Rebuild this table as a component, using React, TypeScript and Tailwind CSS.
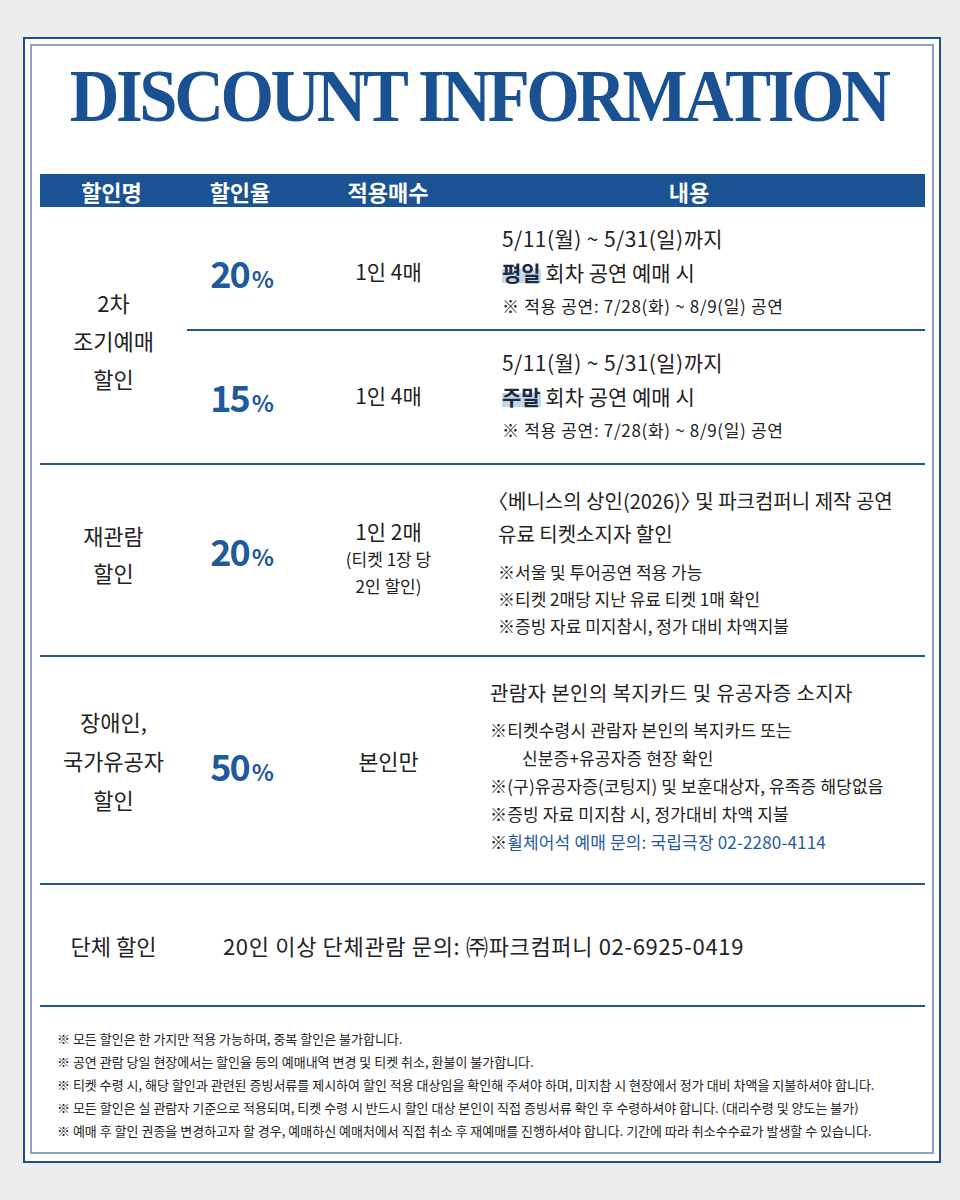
import React from "react";

function Pct({ n }: { n: string }) {
  return (
    <div className="flex items-baseline font-bold text-[#1f5a9c]">
      <span className="text-[36px] leading-none tracking-[-2px]">{n}</span>
      <span className="ml-[3px] text-[23px] leading-none">%</span>
    </div>
  );
}

function SubRow({ pct, day, border }: { pct: string; day: string; border?: boolean }) {
  return (
    <div
      className={
        border
          ? "grid h-[124px] grid-cols-[110px_183px_1fr] border-b-2 border-[#24568f]"
          : "grid flex-1 grid-cols-[110px_183px_1fr]"
      }
    >
      <div className="pt-[14px]">
        <div className="flex h-[102px] items-center justify-center">
          <Pct n={pct} />
        </div>
      </div>
      <div className="pt-[14px]">
        <div className="flex h-[102px] items-center justify-center text-[21px]">1인 4매</div>
      </div>
      <div className="pl-[22px] pt-[14px] leading-[34px]">
        <div className="text-[21px] tracking-[0.02em]">5/11(월) ~ 5/31(일)까지</div>
        <div className="text-[21px]">
          <span className="inline-block bg-[linear-gradient(to_bottom,transparent_38%,#c6d6e9_38%)] font-bold leading-[22px] text-[#1b2b3e]">
            {day}
          </span>{" "}
          회차 공연 예매 시
        </div>
        <div className="text-[17px] tracking-[0.04em]">※ 적용 공연: 7/28(화) ~ 8/9(일) 공연</div>
      </div>
    </div>
  );
}

export default function App() {
  return (
    <div className="h-[1200px] w-[960px] bg-[#ececec] pl-[23px] pt-[37px] font-['Noto_Sans_CJK_KR',sans-serif] text-[#222]">
      <div className="h-[1126px] w-[918px] border-2 border-[#1d4f8a] bg-white px-[5px] pb-[7px] pt-[5px]">
        <div className="flex h-full flex-col border-2 border-[#8aa3c2] pl-[8px] pr-[7px]">
          {/* Title */}
          <div className="flex h-[128px] justify-center pr-[8px] pt-[13px]">
            <h1 className="scale-x-[0.93] whitespace-nowrap font-['Liberation_Serif',serif] text-[74px] font-bold leading-[74px] tracking-[-0.05em] text-[#1a5193]">
              DISCOUNT INFORMATION
            </h1>
          </div>

          {/* Header */}
          <div className="grid h-[33px] grid-cols-[143px_114px_182px_1fr] items-center bg-[#1a5293] text-center text-[22px] font-bold leading-none text-white">
            <div>할인명</div>
            <div>할인율</div>
            <div>적용매수</div>
            <div className="pr-[26px]">내용</div>
          </div>

          {/* Row 1 */}
          <div className="grid h-[258px] grid-cols-[147px_1fr] border-b-2 border-[#24568f]">
            <div className="flex flex-col items-center justify-center pt-[10px] text-[22px] leading-[38px]">
              <span>2차</span>
              <span>조기예매</span>
              <span>할인</span>
            </div>
            <div className="flex flex-col">
              <SubRow pct="20" day="평일" border />
              <SubRow pct="15" day="주말" />
            </div>
          </div>

          {/* Row 2 */}
          <div className="grid h-[192px] grid-cols-[147px_110px_183px_1fr] border-b-2 border-[#24568f]">
            <div className="flex flex-col items-center justify-center pb-[12px] text-[22px] leading-[37px]">
              <span>재관람</span>
              <span>할인</span>
            </div>
            <div className="flex items-center justify-center pb-[20px]">
              <Pct n="20" />
            </div>
            <div className="flex flex-col items-center justify-center pb-[5px]">
              <span className="text-[21px] leading-[28px]">1인 2매</span>
              <span className="text-[17px] leading-[27px]">(티켓 1장 당</span>
              <span className="text-[17px] leading-[27px]">2인 할인)</span>
            </div>
            <div className="pl-[18px] pt-[19px]">
              <div className="text-[20px] leading-[33px]">
                <span className="-ml-[0.5em]">〈</span>베니스의 상인(2026)<span className="tracking-[-0.5em]">〉</span> 및 파크컴퍼니 제작 공연
              </div>
              <div className="text-[20px] leading-[33px]">유료 티켓소지자 할인</div>
              <div className="mt-[8px] text-[17px] leading-[27px]">
                <div>※서울 및 투어공연 적용 가능</div>
                <div>※티켓 2매당 지난 유료 티켓 1매 확인</div>
                <div>※증빙 자료 미지참시, 정가 대비 차액지불</div>
              </div>
            </div>
          </div>

          {/* Row 3 */}
          <div className="grid h-[228px] grid-cols-[147px_110px_183px_1fr] border-b-2 border-[#24568f]">
            <div className="flex flex-col items-center justify-center pb-[20px] text-[22px] leading-[39px]">
              <span>장애인,</span>
              <span>국가유공자</span>
              <span>할인</span>
            </div>
            <div className="flex items-center justify-center pb-[10px]">
              <Pct n="50" />
            </div>
            <div className="flex items-center justify-center pb-[20px] text-[22px]">본인만</div>
            <div className="pl-[10px] pt-[20px]">
              <div className="text-[20px] leading-[32px] tracking-[0.02em]">관람자 본인의 복지카드 및 유공자증 소지자</div>
              <div className="mt-[7px] text-[17px] leading-[28px] tracking-[0.01em]">
                <div>※티켓수령시 관람자 본인의 복지카드 또는</div>
                <div className="pl-[32px]">신분증+유공자증 현장 확인</div>
                <div>※(구)유공자증(코팅지) 및 보훈대상자, 유족증 해당없음</div>
                <div>※증빙 자료 미지참 시, 정가대비 차액 지불</div>
                <div>
                  ※<span className="text-[#1f5aa0]">휠체어석 예매 문의: 국립극장 02-2280-4114</span>
                </div>
              </div>
            </div>
          </div>

          {/* Row 4 */}
          <div className="grid h-[122px] grid-cols-[147px_1fr] items-center border-b-2 border-[#24568f]">
            <div className="text-center text-[22px]">단체 할인</div>
            <div className="pl-[36px] text-[22px] tracking-[0.03em]">20인 이상 단체관람 문의: ㈜파크컴퍼니 02-6925-0419</div>
          </div>

          {/* Footer */}
          <div className="pl-[17px] pt-[20px] text-[13px] leading-[23px] text-[#222]">
            <div>※ 모든 할인은 한 가지만 적용 가능하며, 중복 할인은 불가합니다.</div>
            <div>※ 공연 관람 당일 현장에서는 할인율 등의 예매내역 변경 및 티켓 취소, 환불이 불가합니다.</div>
            <div>※ 티켓 수령 시, 해당 할인과 관련된 증빙서류를 제시하여 할인 적용 대상임을 확인해 주셔야 하며, 미지참 시 현장에서 정가 대비 차액을 지불하셔야 합니다.</div>
            <div>※ 모든 할인은 실 관람자 기준으로 적용되며, 티켓 수령 시 반드시 할인 대상 본인이 직접 증빙서류 확인 후 수령하셔야 합니다. (대리수령 및 양도는 불가)</div>
            <div>※ 예매 후 할인 권종을 변경하고자 할 경우, 예매하신 예매처에서 직접 취소 후 재예매를 진행하셔야 합니다. 기간에 따라 취소수수료가 발생할 수 있습니다.</div>
          </div>
        </div>
      </div>
    </div>
  );
}
